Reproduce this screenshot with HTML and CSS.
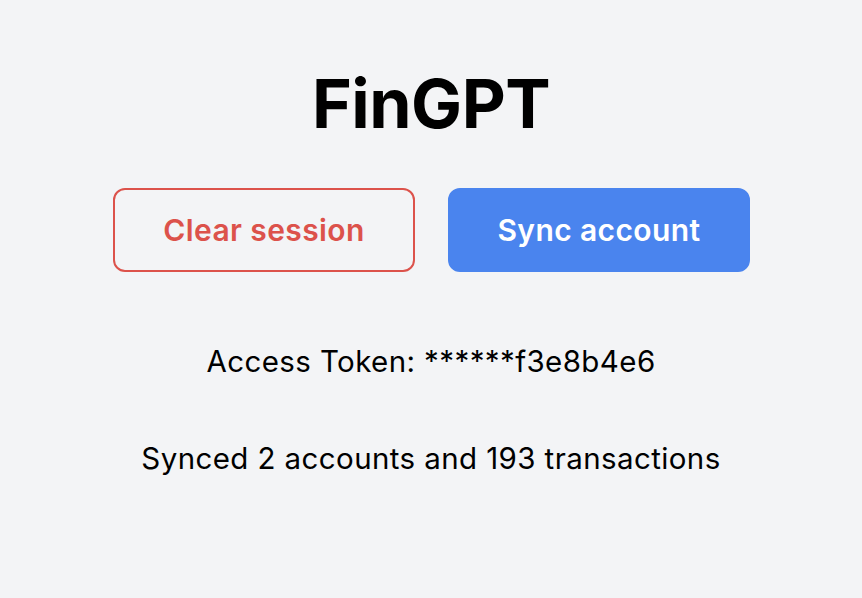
FILE: index.html
```html
<!DOCTYPE html>
<html>
<head>
<meta charset="utf-8">
<link rel="stylesheet" href="styles.css">
</head>
<body>
<main class="app">
  <h1 class="title">FinGPT</h1>
  <div class="actions">
    <button class="btn btn-outline">Clear session</button>
    <button class="btn btn-primary">Sync account</button>
  </div>
  <p class="token">Access Token: ******f3e8b4e6</p>
  <p class="status">Synced 2 accounts and 193 transactions</p>
</main>
</body>
</html>
```
FILE: styles.css
```css
html, body {
  margin: 0;
  padding: 0;
  background: #f3f4f6;
  font-family: Inter, "Noto Sans", sans-serif;
  color: #000;
}
.app {
  display: flex;
  flex-direction: column;
  align-items: center;
  padding-top: 62px;
}
.title {
  margin: 0;
  font-size: 68px;
  font-weight: 700;
  line-height: 82px;
  letter-spacing: -0.5px;
}
.actions {
  display: flex;
  gap: 33px;
  margin-top: 44px;
  padding-left: 1px;
}
.btn {
  width: 302px;
  height: 84px;
  border-radius: 12px;
  font-family: inherit;
  font-size: 30px;
  font-weight: 600;
  letter-spacing: 0.4px;
  box-sizing: border-box;
  cursor: pointer;
}
.btn-outline {
  background: transparent;
  border: 2px solid #dc524b;
  color: #dc524b;
}
.btn-primary {
  background: #4a84ee;
  border: 2px solid #4a84ee;
  color: #fff;
}
.token, .status {
  margin: 0;
  font-size: 29.5px;
  letter-spacing: 0.4px;
  line-height: 34px;
}
.token {
  margin-top: 72px;
}
.status {
  margin-top: 63px;
}
```
